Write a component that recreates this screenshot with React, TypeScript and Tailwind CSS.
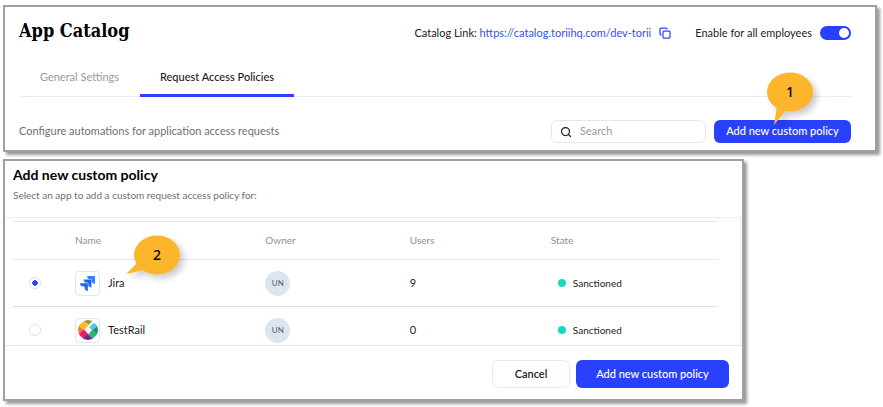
import { useState } from 'react'
import type { ReactNode } from 'react'
import { Copy, Search } from 'lucide-react'

const JiraLogo = () => (
  <svg viewBox="0 0 24 24" className="h-[15px] w-[15px]" aria-hidden="true">
    <defs>
      <linearGradient id="jira" x1="1" y1="0" x2="0" y2="1">
        <stop offset="0.2" stopColor="#1d5be0" />
        <stop offset="0.7" stopColor="#2f80ff" />
      </linearGradient>
    </defs>
    <path
      d="M23 0H11.450a5.200 5.200 0 0 0 5.200 5.200h2.130v2.060A5.200 5.200 0 0 0 24 12.480V1a1 1 0 0 0-1-1Z"
      fill="#2f80ff"
    />
    <path
      d="M17.300 5.750H5.740a5.200 5.200 0 0 0 5.200 5.200h2.130v2.060a5.200 5.200 0 0 0 5.230 5.200V6.750a1 1 0 0 0-1-1Z"
      fill="url(#jira)"
    />
    <path
      d="M11.570 11.500H0a5.200 5.200 0 0 0 5.230 5.200h2.130v2.060A5.200 5.200 0 0 0 12.570 24V12.500a1 1 0 0 0-1-1Z"
      fill="url(#jira)"
    />
  </svg>
)

const TestRailLogo = () => (
  <svg viewBox="0 0 20 20" className="h-5 w-5" aria-hidden="true">
    <defs>
      <clipPath id="ring">
        <circle cx="10" cy="10" r="10" />
      </clipPath>
    </defs>
    <g clipPath="url(#ring)">
      <path d="M6 1.500 10-3.500 14.500 1 10.500 5Z" fill="#8fa33c" />
      <path d="M5.500 1 10.500 5.500 6 10 .5 5.500Z" fill="#fdb72b" />
      <path d="M.5 5.500 6 10 1 14.500-3.500 10Z" fill="#f0802c" />
      <path d="M6 9.500 10.500 14.500 6 19 .5 14.500Z" fill="#ea1a6c" />
      <path d="M10 14 15 19 10 23.500 5 19Z" fill="#6b2786" />
      <path d="M14.500 9.500 19.500 14.500 14.500 19 10 14.500Z" fill="#33b27c" />
      <path d="M19.500 5 23.500 10 19.500 14.500 14.500 10Z" fill="#0f8f74" />
      <path d="M15.500 3 20 5 14.500 10.500 11 7.500Z" fill="#5bc4e6" />
    </g>
  </svg>
)

const apps = [
  { name: 'Jira', logo: <JiraLogo />, owner: 'UN', users: 9, state: 'Sanctioned' },
  { name: 'TestRail', logo: <TestRailLogo />, owner: 'UN', users: 0, state: 'Sanctioned' },
]

const Panel = ({ className = '', children }: { className?: string; children: ReactNode }) => (
  <section
    className={`border-2 border-[#a39f9f] bg-white shadow-[3px_3px_3px_rgba(0,0,0,0.4)] ${className}`}
  >
    {children}
  </section>
)

const Callout = ({ label, tail, className }: { label: string; tail: string; className: string }) => (
  <span className={`pointer-events-none absolute z-10 h-10 w-[46px] ${className}`}>
    <svg
      viewBox="0 0 46 40"
      className="absolute inset-0 h-full w-full overflow-visible drop-shadow-[4px_4px_3px_rgba(0,0,0,0.2)]"
      aria-hidden="true"
    >
      <ellipse cx="23" cy="20" rx="23" ry="19.500" fill="#fdb52c" />
      <path d={tail} fill="#fdb52c" />
    </svg>
    <span className="relative flex h-full items-center justify-center font-['Noto_Sans',sans-serif] text-sm font-medium text-black">
      {label}
    </span>
  </span>
)

export default function App() {
  const [enabled, setEnabled] = useState(true)
  const [selected, setSelected] = useState('Jira')

  return (
    <main className="flex flex-col gap-[7px] bg-white pt-[5px] pr-1.5 pb-1.5 pl-[3px] font-[Lato,sans-serif] text-[11px] text-[#1f2024]">
      <Panel className="pr-6 pb-[7px] pl-3.5">
        <header className="flex items-center justify-between pt-2.5">
          <h1 className="font-['DejaVu_Serif_Condensed','DejaVu_Serif',serif] text-lg leading-7 font-bold text-black">
            App Catalog
          </h1>
          <div className="flex items-center pt-1">
            <span>
              Catalog Link:{' '}
              <a href="https://catalog.toriihq.com/dev-torii" className="text-[#3351f5]">
                https://catalog.toriihq.com/dev-torii
              </a>
            </span>
            <button type="button" aria-label="Copy link" className="ml-2 text-[#2a44f5]">
              <Copy size={12} strokeWidth={2.500} />
            </button>
            <label className="ml-6 flex cursor-pointer items-center gap-2">
              Enable for all employees
              <input
                type="checkbox"
                role="switch"
                checked={enabled}
                onChange={() => setEnabled(!enabled)}
                className="peer sr-only"
              />
              <span className="flex h-3.5 w-[31px] items-center rounded-full bg-gray-300 px-0.5 peer-checked:justify-end peer-checked:bg-[#2a41fb]">
                <span className="h-2.5 w-2.5 rounded-full bg-white" />
              </span>
            </label>
          </div>
        </header>

        <nav className="mt-3.5 flex border-b border-[#e8ebfa]">
          <button type="button" className="w-[121px] pt-2.5 pb-[11px] leading-4 text-[#9a9a9a]">
            General Settings
          </button>
          <button
            type="button"
            className="-mb-px w-[154px] border-b-[3px] border-[#2a41fb] pt-2.5 pb-[9px] leading-4 font-medium"
          >
            Request Access Policies
          </button>
        </nav>

        <div className="mt-[23px] flex items-center gap-2">
          <p className="flex-1 text-[#6f6f6f]">Configure automations for application access requests</p>
          <label className="flex h-[23px] w-[155px] items-center gap-2 rounded-md border border-[#e2e6f5] px-2">
            <Search size={12} strokeWidth={2.500} className="shrink-0" />
            <input
              type="search"
              aria-label="Search"
              placeholder="Search"
              className="w-full min-w-0 outline-none placeholder:text-[#9a9a9a]"
            />
          </label>
          <div className="relative">
            <button
              type="button"
              className="block h-[23px] w-[137px] rounded-md bg-[#2a41fb] font-medium text-white"
            >
              Add new custom policy
            </button>
            <Callout label="1" tail="M10 34 7 53 20 37Z" className="bottom-[31px] left-[53px]" />
          </div>
        </div>
      </Panel>

      <Panel className="w-full max-w-[741px]">
        <header className="px-2 pt-1 pb-3.5">
          <h2 className="mb-0.5 text-sm leading-5 font-bold text-black">Add new custom policy</h2>
          <p className="text-[10px] leading-4 text-[#6f6f6f]">
            Select an app to add a custom request access policy for:
          </p>
        </header>

        <div className="mr-px h-32 overflow-hidden border-t border-r border-[#e8eff8] pt-[3px] pr-[22px] pl-2">
          <table className="w-full table-fixed border-collapse text-left">
            <thead>
              <tr className="h-[38px] border-y border-[#e8e8ea] text-[10px] text-[#8f8f8f]">
                <th className="w-[62px]" aria-label="Selected" />
                <th className="w-[27%] font-normal">Name</th>
                <th className="w-[20.500%] font-normal">Owner</th>
                <th className="w-[20%] font-normal">Users</th>
                <th className="font-normal">State</th>
              </tr>
            </thead>
            <tbody>
              {apps.map((app) => (
                <tr key={app.name} className="h-[47px] border-b border-[#e2e2e6]">
                  <td className="pl-4">
                    <input
                      type="radio"
                      name="app"
                      aria-label={app.name}
                      checked={selected === app.name}
                      onChange={() => setSelected(app.name)}
                      className="block h-3 w-3 appearance-none rounded-full border border-[#d9e0f2] bg-white checked:bg-[radial-gradient(#2a41fb_0_2.500px,transparent_3px)]"
                    />
                  </td>
                  <td>
                    <div className="relative flex items-center gap-2">
                      <span className="flex h-[25px] w-[25px] items-center justify-center rounded-sm border border-[#dfe5f1]">
                        {app.logo}
                      </span>
                      {app.name}
                      {app.name === 'Jira' && (
                        <Callout label="2" tail="M3 28-8 39 10 35Z" className="-top-9 left-[59px]" />
                      )}
                    </div>
                  </td>
                  <td>
                    <span className="flex h-[25px] w-[25px] items-center justify-center rounded-full bg-[#dfe5f0] text-[8px] text-[#55585f]">
                      {app.owner}
                    </span>
                  </td>
                  <td>{app.users}</td>
                  <td>
                    <span className="flex items-center gap-[7px] pl-[7px] text-[10px]">
                      <span className="h-2 w-2 rounded-full bg-[#17d9c6]" />
                      {app.state}
                    </span>
                  </td>
                </tr>
              ))}
            </tbody>
          </table>
        </div>

        <footer className="flex justify-end gap-1.5 border-t border-[#e0e2ee] pt-3.5 pr-[13px] pb-[11px]">
          <button type="button" className="h-7 w-[78px] rounded-md border border-[#e8eaf6] font-semibold">
            Cancel
          </button>
          <button type="button" className="h-7 w-[153px] rounded-md bg-[#2a41fb] font-medium text-white">
            Add new custom policy
          </button>
        </footer>
      </Panel>
    </main>
  )
}
